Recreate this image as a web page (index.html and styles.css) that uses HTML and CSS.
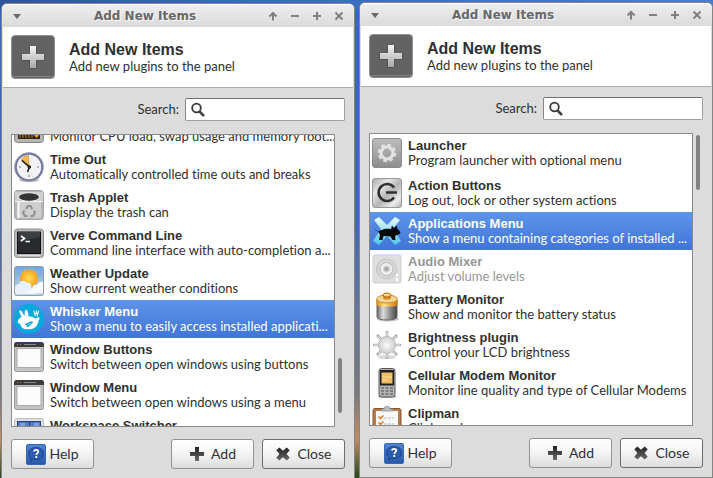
FILE: index.html
```
<!DOCTYPE html>
<html lang="en">
<head>
<meta charset="utf-8">
<title>Add New Items</title>
<link rel="stylesheet" href="styles.css">
</head>
<body>
<svg class="defs" aria-hidden="true">
  <defs>
    <linearGradient id="g-metal" x1="0" y1="0" x2="0" y2="1"><stop offset="0" stop-color="#f4f4f4"/><stop offset="1" stop-color="#a9a9a9"/></linearGradient>
    <linearGradient id="g-gray" x1="0" y1="0" x2="0" y2="1"><stop offset="0" stop-color="#bdbdbd"/><stop offset="1" stop-color="#8d8d8d"/></linearGradient>
    <linearGradient id="g-brush" x1="0" y1="0" x2="1" y2="1"><stop offset="0" stop-color="#a8a8a8"/><stop offset=".3" stop-color="#e6e6e6"/><stop offset=".55" stop-color="#b4b4b4"/><stop offset=".8" stop-color="#ececec"/><stop offset="1" stop-color="#aaa"/></linearGradient>
    <linearGradient id="g-dark" x1="0" y1="0" x2="0" y2="1"><stop offset="0" stop-color="#222"/><stop offset="1" stop-color="#6a6a6a"/></linearGradient>
    <linearGradient id="g-sky" x1="0" y1="0" x2="0" y2="1"><stop offset="0" stop-color="#6fa5df"/><stop offset="1" stop-color="#c3dcf2"/></linearGradient>
    <linearGradient id="g-cell" x1="0" y1="0" x2="1" y2="0"><stop offset="0" stop-color="#666"/><stop offset=".3" stop-color="#ddd"/><stop offset=".6" stop-color="#999"/><stop offset="1" stop-color="#444"/></linearGradient>
    <linearGradient id="g-amber" x1="0" y1="0" x2="1" y2="0"><stop offset="0" stop-color="#d98a10"/><stop offset=".35" stop-color="#ffe08a"/><stop offset="1" stop-color="#d07c08"/></linearGradient>
    <radialGradient id="g-sun"><stop offset="0" stop-color="#ffdd55"/><stop offset="1" stop-color="#f5a31c"/></radialGradient>
    <radialGradient id="g-ball"><stop offset="0" stop-color="#fafafa"/><stop offset="1" stop-color="#cfcfcf"/></radialGradient>
    <linearGradient id="g-blue" x1="0" y1="0" x2="0" y2="1"><stop offset="0" stop-color="#5286cf"/><stop offset="1" stop-color="#2a58a8"/></linearGradient>
    <linearGradient id="g-ice" x1="0" y1="0" x2="0" y2="1"><stop offset="0" stop-color="#e8faff"/><stop offset="1" stop-color="#4cc4ea"/></linearGradient>
  </defs>
  <symbol id="i-menu" viewBox="0 0 22 22"><path d="M7 9h8l-4 5z" fill="#6a6a6a"/></symbol>
  <symbol id="i-up" viewBox="0 0 22 22"><path d="M11 15.500V9M7.500 11.500L11 8l3.500 3.500" fill="none" stroke="#808080" stroke-width="2"/></symbol>
  <symbol id="i-min" viewBox="0 0 22 22"><path d="M7 10h8v2H7z" fill="#808080"/></symbol>
  <symbol id="i-max" viewBox="0 0 22 22"><path d="M10 7h2v3h3v2h-3v3h-2v-3H7v-2h3z" fill="#808080"/></symbol>
  <symbol id="i-close" viewBox="0 0 22 22"><path d="M7.500 7.500l7 7M14.500 7.500l-7 7" stroke="#808080" stroke-width="2"/></symbol>
  <symbol id="i-plugin" viewBox="0 0 44 44">
    <rect x=".5" y=".5" width="43" height="43" rx="3.500" fill="#636363" stroke="#929292"/>
    <path d="M2 41.500h40" stroke="#848484"/>
    <path d="M18.500 11.500h7v8h8v6h-8v8h-7v-8h-8v-6h8z" fill="#444"/>
    <path d="M19 11h6v8h8v6h-8v8h-6v-8h-8v-6h8z" fill="url(#g-metal)"/>
  </symbol>
  <symbol id="i-search" viewBox="0 0 16 16"><circle cx="6.500" cy="6" r="4.300" fill="#fafafa" stroke="#3a3a3a" stroke-width="1.800"/><path d="M9.500 9.500l4.500 4.500" stroke="#444" stroke-width="2.600"/></symbol>
  <symbol id="i-help" viewBox="0 0 20 21">
    <rect x=".5" y=".5" width="19" height="20" rx="1.500" fill="url(#g-blue)" stroke="#3767b4"/>
    <path d="M10 3.500c4.600 0 7.500 2.400 7.500 6s-3 6-7.500 6c-1 0-2-.1-2.800-.4L4.500 17l.3-3C3.300 13 2.500 11.400 2.500 9.500c0-3.600 3-6 7.500-6z" fill="#285bb0" stroke="#173f86" stroke-width=".8"/>
    <path d="M7.800 7.500c.3-1.200 1-1.600 2.300-1.600s2.200.6 2.200 1.700c0 1.500-2 1.600-2 3.300M10.300 12v2" fill="none" stroke="#fff" stroke-width="1.800"/>
  </symbol>
  <symbol id="i-add" viewBox="0 0 16 16"><path d="M6 1h4v5h5v4h-5v5H6v-5H1V6h5z" fill="url(#g-dark)"/></symbol>
  <symbol id="i-cross" viewBox="0 0 16 16"><path d="M4.300 1.500L8 4.700l3.700-3.200 3 2.800L11.600 8l3.100 3.700-3 2.800L8 11.300l-3.700 3.200-3-2.800L4.400 8 1.300 4.300z" fill="url(#g-dark)"/></symbol>
  <symbol id="i-cpu" viewBox="0 0 30 30">
    <rect x=".5" y="1.500" width="29" height="27" rx="3" fill="#b5b5b5" stroke="#858585"/><rect x="4" y="4" width="22" height="21" fill="#2a2118"/>
    <path d="M6 24v-4M9 24v-7M12 24v-5M15 24v-9M18 24v-4" stroke="#755017" stroke-width="2"/><path d="M20 21h5l-2.500 3z" fill="#ffa800"/>
  </symbol>
  <symbol id="i-clock" viewBox="0 0 30 30">
    <ellipse cx="15" cy="28" rx="10" ry="2" fill="#bbb"/>
    <circle cx="15" cy="15" r="13.400" fill="#f2f2f4" stroke="#72789a" stroke-width="2.400"/><circle cx="15" cy="15" r="14.500" fill="none" stroke="#a7abc0" stroke-width=".8"/>
    <path d="M15 15L7 8c2-3 4.600-4.400 7.500-4.500z" fill="#f2ba54" stroke="#bd872b" stroke-width=".6"/>
    <path d="M14 23h2v2h-2zM5 14h2v2H5zM23 14h2v2h-2z" fill="#b4b4b4"/>
    <path d="M8 8.500l7.500 6.500-2 5" fill="none" stroke="#111" stroke-width="1.500"/><circle cx="15.300" cy="15" r="1.800" fill="#222"/>
  </symbol>
  <symbol id="i-trash" viewBox="0 0 30 30">
    <rect x=".5" y=".5" width="29" height="29" rx="3" fill="#b7b7b7" stroke="#a6a6a6"/>
    <path d="M1 2h28v9H1z" fill="#cfcfcf"/><path d="M3 12h24v16H3z" fill="#cecece"/><path d="M4.500 12v16" stroke="#f6f6f6" stroke-width="2"/><path d="M1 11.500h28" stroke="#f4f4f4"/>
    <ellipse cx="15" cy="7" rx="10.500" ry="4.300" fill="#343434" stroke="#f2f2f2"/>
    <path d="M12 19l2-3h2.500l1.800 3M20 20.500l1 2.500-2 3h-2.500M13.500 26h-2.500l-2-3 1.500-2.500" fill="none" stroke="#8f8f8f" stroke-width="2"/>
  </symbol>
  <symbol id="i-term" viewBox="0 0 30 30">
    <rect x=".5" y="1" width="29" height="28.500" rx="3" fill="#b8b8b8" stroke="#8c8c8c"/><rect x="3.500" y="4" width="23" height="21.500" fill="#282a2d" stroke="#111"/>
    <path d="M4 14l22-5V4H4z" fill="#3b3d40"/><path d="M7 8l3.500 2.500L7 13M11.500 13.500H16" fill="none" stroke="#fff" stroke-width="1.600"/><path d="M4 27.500h22" stroke="#ddd"/>
  </symbol>
  <symbol id="i-weather" viewBox="0 0 30 30">
    <rect x=".5" y=".5" width="29" height="29" rx="2" fill="url(#g-sky)" stroke="#929da8"/>
    <path d="M15 2v24M3 14h24M6.500 5.500l17 17M23.500 5.500l-17 17M10 3l9 22M20 3l-9 22" stroke="#c3c2a4" stroke-width="1"/>
    <circle cx="15" cy="12.500" r="9" fill="url(#g-sun)"/>
    <path d="M1 25c-.5-5 1-7 4-7 1-4 6-4 8-1 3-1 5 2 4 4l5 4v3H2z" fill="#e9f1fa"/><path d="M18 24c0-4 2-6 5-5 1-3 4-4 6-3v11H13c0-3 2-4 5-3z" fill="#f7faff"/>
  </symbol>
  <symbol id="i-whisker" viewBox="0 0 32 32">
    <circle cx="16" cy="16" r="16" fill="#08a8dc"/>
    <path d="M4 18c.5-2 2-3.400 4-4L5.800 8.500C5 6.500 7 5.800 8 7.500l3.200 5.300.3-4.800c.2-2.300 2.800-2.300 3.200 0l1 5.500c3-.5 5 .5 7 2l3-1.500c2 0 2.300 2 .5 3.200-.3 5-3.500 9.300-9.500 9.800-6.500.5-9.500-2-10.200-6C5 20.800 3.700 19.800 4 18z" fill="#fff"/>
    <path d="M12 22l7-3M15 24l5-5M13.500 24.500l3-5.500" stroke="#08a8dc" stroke-width="1.300"/><path d="M21 7l1.500 5 1.500-4 1 4 1.500-5" fill="none" stroke="#d6f2fc" stroke-width="1.300"/>
  </symbol>
  <symbol id="i-window" viewBox="0 0 30 30">
    <rect x=".5" y=".5" width="29" height="29" rx="2" fill="#c4c4c4" stroke="#999"/><path d="M0 5V3c0-2 1-3 3-3h24c2 0 3 1 3 3v2z" fill="#3b3b3b"/>
    <path d="M10 2.500h12" stroke="#888"/><path d="M3 2.500h1M6 2.500h1" stroke="#b77d53"/><rect x="3" y="6.500" width="24" height="19" fill="#fcfcfc" stroke="#aaa"/>
  </symbol>
  <symbol id="i-workspace" viewBox="0 0 30 30">
    <rect x=".5" y=".5" width="29" height="29" rx="2" fill="#e1e1e1" stroke="#bbb"/><rect x="3" y="3" width="24" height="22" fill="#203e82"/>
    <path d="M4 4h11v9H4zM16 4h10v9H16z" fill="#527cc0"/><path d="M6 5h5v5H6zM20 5h5v5h-5z" fill="#7fa0d4"/>
  </symbol>
  <symbol id="i-gear" viewBox="0 0 30 30">
    <rect x=".5" y=".5" width="29" height="29" rx="2.500" fill="url(#g-gray)" stroke="#8a8a8a"/>
    <circle cx="15" cy="15" r="8.300" fill="none" stroke="#e2e2e2" stroke-width="2" stroke-dasharray="3.800 2.720"/>
    <circle cx="15" cy="15" r="6" fill="none" stroke="#e2e2e2" stroke-width="3.200"/>
  </symbol>
  <symbol id="i-power" viewBox="0 0 30 30">
    <rect x=".5" y=".5" width="29" height="29" rx="2.500" fill="url(#g-brush)" stroke="#999"/>
    <path d="M22 9.500a8.500 8.500 0 1 0 0 10M14 14.500h11" fill="none" stroke="#303030" stroke-width="2.600"/>
  </symbol>
  <symbol id="i-xfce" viewBox="0 0 30 30">
    <path d="M2 4l5-3 8 8 8-8 5 3-7 9 8 12-6 4-8-9-8 9-6-4 8-12z" fill="url(#g-ice)"/>
    <path d="M1 8.500c1 5 3 7 6 6.500 5-2.500 9-2.500 12-2l1-3.500 2 2.500 2.500-2.500 1 3.500c1.500.5 2.500 2.500 3 4-1.500 1.500-3 2-4 2l-1.500 1.500.5 3.500h-3l-2-3.500-7-.5-1 4H7l1-5-2-4C3.500 14.500 1.500 12.500 1 8.500z" fill="#080808"/>
  </symbol>
  <symbol id="i-audio" viewBox="0 0 30 30">
    <rect x="1" y="1" width="28" height="28" rx="2" fill="#dedede" stroke="#cfcfcf"/><circle cx="14.500" cy="15" r="10" fill="#d6d6d6" stroke="#c3c3c3"/>
    <circle cx="14.500" cy="15" r="6.500" fill="#eee" stroke="#bbb"/><circle cx="14.500" cy="15" r="3" fill="#aaa" stroke="#ddd"/><path d="M25 20v2M25 24v3" stroke="#fff" stroke-width="2"/>
  </symbol>
  <symbol id="i-battery" viewBox="0 0 30 30">
    <ellipse cx="16" cy="27" rx="11" ry="2.500" fill="#c4c4c4"/>
    <path d="M5 8v17c0 4 20 4 20 0V8z" fill="url(#g-cell)" stroke="#666"/><path d="M4.500 7v6c2 2.500 19 2.500 21 0V7z" fill="url(#g-amber)"/>
    <ellipse cx="15" cy="7" rx="10.300" ry="4" fill="#f6d598" stroke="#c98a2c"/><path d="M11 3v3c0 2 8 2 8 0V3z" fill="#d58a20"/><ellipse cx="15" cy="3" rx="4" ry="2" fill="#ffd38d" stroke="#b66c14"/>
  </symbol>
  <symbol id="i-bright" viewBox="0 0 30 30">
    <ellipse cx="15" cy="27" rx="9" ry="2" fill="#d8d8d8"/>
    <path d="M15 1v28M1 15h28M5 5l20 20M25 5L5 25" stroke="#aaa" stroke-width="2.600"/><path d="M15 2v26M2 15h26M6 6l18 18M24 6L6 24" stroke="#eee"/>
    <circle cx="15" cy="15" r="8.500" fill="url(#g-ball)" stroke="#bbb"/>
  </symbol>
  <symbol id="i-phone" viewBox="0 0 30 30">
    <ellipse cx="15" cy="28.500" rx="10" ry="1.500" fill="#b8b8b8"/><rect x="7" y=".5" width="16" height="28.500" rx="2.500" fill="#b4b4b4" stroke="#555"/>
    <rect x="8" y="2" width="14" height="15.500" fill="#202020"/><rect x="9.500" y="4.500" width="11" height="11" fill="#f1bd62"/><path d="M10 9h10M10 12h6" stroke="#ffe0a0"/>
    <path d="M9 20h12M9 23h12M9 26h12" stroke="#6d6d6d" stroke-width="1.500" stroke-dasharray="3 1.500"/>
  </symbol>
  <symbol id="i-clip" viewBox="0 0 30 30">
    <rect x="1" y="2.500" width="28" height="30" rx="2" fill="#b77c4c" stroke="#8d5527"/><path d="M4 5h22v25H4z" fill="#f7f7f7"/>
    <path d="M9 5V3h3c0-4 6-4 6 0h3v2z" fill="#bcbcbc" stroke="#888" stroke-width=".7"/>
    <path d="M12 12h10M12 18h10" stroke="#bbb" stroke-dasharray="3 1"/><path d="M6.500 10.500l2 2 3-3M6.500 16.500l2 2 3-3M6.500 22.500l2 2 3-3" fill="none" stroke="#e07921" stroke-width="1.500"/>
  </symbol>
</svg>

<main class="desktop">
  <section class="window window-back">
    <header class="titlebar">
      <button class="wm" aria-label="Window menu"><svg><use href="#i-menu"/></svg></button>
      <span class="caption">Add New Items</span>
      <button class="wm" aria-label="Roll up"><svg><use href="#i-up"/></svg></button>
      <button class="wm" aria-label="Minimize"><svg><use href="#i-min"/></svg></button>
      <button class="wm" aria-label="Maximize"><svg><use href="#i-max"/></svg></button>
      <button class="wm" aria-label="Close window"><svg><use href="#i-close"/></svg></button>
    </header>
    <div class="banner">
      <svg class="banner-icon"><use href="#i-plugin"/></svg>
      <div><h1>Add New Items</h1><p>Add new plugins to the panel</p></div>
    </div>
    <div class="content">
      <div class="search">
        <label for="search-a">Search:</label>
        <div class="field"><svg><use href="#i-search"/></svg><input id="search-a" type="text"></div>
      </div>
      <div class="browser">
        <ul class="items scrolled">
          <li><svg class="icon"><use href="#i-cpu"/></svg><div><p>Monitor CPU load, swap usage and memory foot...</p></div></li>
          <li><svg class="icon"><use href="#i-clock"/></svg><div><h2>Time Out</h2><p>Automatically controlled time outs and breaks</p></div></li>
          <li><svg class="icon"><use href="#i-trash"/></svg><div><h2>Trash Applet</h2><p>Display the trash can</p></div></li>
          <li><svg class="icon"><use href="#i-term"/></svg><div><h2>Verve Command Line</h2><p>Command line interface with auto-completion a...</p></div></li>
          <li><svg class="icon"><use href="#i-weather"/></svg><div><h2>Weather Update</h2><p>Show current weather conditions</p></div></li>
          <li class="selected"><svg class="icon"><use href="#i-whisker"/></svg><div><h2>Whisker Menu</h2><p>Show a menu to easily access installed applicati...</p></div></li>
          <li><svg class="icon"><use href="#i-window"/></svg><div><h2>Window Buttons</h2><p>Switch between open windows using buttons</p></div></li>
          <li><svg class="icon"><use href="#i-window"/></svg><div><h2>Window Menu</h2><p>Switch between open windows using a menu</p></div></li>
          <li><svg class="icon"><use href="#i-workspace"/></svg><div><h2>Workspace Switcher</h2></div></li>
        </ul>
        <div class="thumb thumb-end"></div>
      </div>
      <footer class="actions">
        <button class="btn help"><svg><use href="#i-help"/></svg>Help</button>
        <button class="btn"><svg><use href="#i-add"/></svg>Add</button>
        <button class="btn default"><svg><use href="#i-cross"/></svg>Close</button>
      </footer>
    </div>
  </section>

  <section class="window">
    <header class="titlebar">
      <button class="wm" aria-label="Window menu"><svg><use href="#i-menu"/></svg></button>
      <span class="caption">Add New Items</span>
      <button class="wm" aria-label="Roll up"><svg><use href="#i-up"/></svg></button>
      <button class="wm" aria-label="Minimize"><svg><use href="#i-min"/></svg></button>
      <button class="wm" aria-label="Maximize"><svg><use href="#i-max"/></svg></button>
      <button class="wm" aria-label="Close window"><svg><use href="#i-close"/></svg></button>
    </header>
    <div class="banner">
      <svg class="banner-icon"><use href="#i-plugin"/></svg>
      <div><h1>Add New Items</h1><p>Add new plugins to the panel</p></div>
    </div>
    <div class="content">
      <div class="search">
        <label for="search-b">Search:</label>
        <div class="field"><svg><use href="#i-search"/></svg><input id="search-b" type="text"></div>
      </div>
      <div class="browser">
        <ul class="items">
          <li class="pinned"><svg class="icon"><use href="#i-gear"/></svg><div><h2>Launcher</h2><p>Program launcher with optional menu</p></div></li>
          <li><svg class="icon"><use href="#i-power"/></svg><div><h2>Action Buttons</h2><p>Log out, lock or other system actions</p></div></li>
          <li class="selected"><svg class="icon"><use href="#i-xfce"/></svg><div><h2>Applications Menu</h2><p>Show a menu containing categories of installed ...</p></div></li>
          <li class="disabled"><svg class="icon"><use href="#i-audio"/></svg><div><h2>Audio Mixer</h2><p>Adjust volume levels</p></div></li>
          <li><svg class="icon"><use href="#i-battery"/></svg><div><h2>Battery Monitor</h2><p>Show and monitor the battery status</p></div></li>
          <li><svg class="icon"><use href="#i-bright"/></svg><div><h2>Brightness plugin</h2><p>Control your LCD brightness</p></div></li>
          <li><svg class="icon"><use href="#i-phone"/></svg><div><h2>Cellular Modem Monitor</h2><p>Monitor line quality and type of Cellular Modems</p></div></li>
          <li><svg class="icon"><use href="#i-clip"/></svg><div><h2>Clipman</h2><p>Clipboard</p></div></li>
        </ul>
        <div class="thumb"></div>
      </div>
      <footer class="actions">
        <button class="btn help"><svg><use href="#i-help"/></svg>Help</button>
        <button class="btn"><svg><use href="#i-add"/></svg>Add</button>
        <button class="btn default"><svg><use href="#i-cross"/></svg>Close</button>
      </footer>
    </div>
  </section>
</main>
</body>
</html>
```
FILE: styles.css
```
* { box-sizing: border-box; }

body {
  margin: 0;
  font: 13px/15px Lato, "Liberation Sans", sans-serif;
  font-variant-ligatures: none;
  color: #303030;
}

h1, h2, p, ul { margin: 0; padding: 0; }
svg { display: block; flex: none; }
.defs { position: absolute; width: 0; height: 0; }

.desktop {
  display: flex;
  gap: 4px;
  height: 100vh;
  padding: 2px 0 0 1px;
  overflow: hidden;
  background:
    linear-gradient(90deg, #2f5599, #3568c0 30%, #4a7bcb) top / 100% 10px no-repeat,
    linear-gradient(#3568b8, #3f67b4 45%, #66759b 65%, #77797d 82%, #c08a62 92%, #234a1c);
}

.window {
  display: flex;
  flex: 1;
  flex-direction: column;
  min-width: 0;
  height: calc(100vh - 2px);
  border: 1px solid #858585;
  border-radius: 6px 6px 0 0;
  background: #dcdcdc;
}

.window-back { margin-top: 1px; }

.titlebar {
  display: flex;
  align-items: center;
  height: 23px;
  padding: 0 4px;
  border-top: 1px solid #fff;
  border-radius: 5px 5px 0 0;
  background: linear-gradient(#eeeeee, #dadada);
}

.caption {
  flex: 1;
  font: bold 12px/16px "DejaVu Sans", sans-serif;
  text-align: center;
  color: #686868;
  text-shadow: 1px 1px 0 #f8f8f8;
}

.wm {
  width: 22px;
  height: 22px;
  padding: 0;
  border: 0;
  background: none;
}

.wm svg { width: 22px; height: 22px; }

.banner {
  display: flex;
  align-items: center;
  gap: 14px;
  height: 61px;
  margin: 0 1px;
  padding: 0 8px;
  border-bottom: 1px solid #acacac;
  background: #fff;
}

.banner-icon { width: 44px; height: 44px; }

h1, h2 { font-family: "Liberation Sans", Arial, sans-serif; }
h1 { font-size: 16px; line-height: 18px; }
h2 { font-size: 13px; line-height: 15px; }

.content {
  display: flex;
  flex: 1;
  flex-direction: column;
  min-height: 0;
  padding: 10px 9px 9px;
}

.search {
  display: flex;
  align-items: center;
  justify-content: flex-end;
  gap: 6px;
  margin-bottom: 13px;
}

.field {
  display: flex;
  align-items: center;
  width: 160px;
  height: 23px;
  padding: 0 4px;
  border: 1px solid #a0a0a0;
  border-top-color: #707070;
  border-left-color: #858585;
  border-radius: 2px;
  background: #fff;
}

.field svg { width: 16px; height: 16px; }

.field input {
  width: 100%;
  border: 0;
  outline: 0;
  font: inherit;
  background: none;
}

.browser {
  display: flex;
  flex: 1;
  gap: 3px;
  min-height: 0;
  margin-bottom: 12px;
  padding-right: 3px;
}

.items {
  flex: 1;
  min-width: 0;
  overflow: hidden;
  border: 1px solid #8a8a8a;
  background: #fff;
  list-style: none;
}

.items li {
  display: flex;
  align-items: center;
  gap: 6px;
  height: 38px;
  padding: 0 2px;
  white-space: nowrap;
}

.items li:last-child { align-items: flex-start; padding-top: 4px; }

.scrolled li:first-child {
  align-items: flex-end;
  margin-top: -25px;
  padding-bottom: 4px;
}

.items .pinned { margin-bottom: 2px; }

.icon { width: 30px; height: 30px; }

.items .selected {
  color: #fff;
  background: linear-gradient(#5d95e8, #4174d8);
}

.disabled { color: #969696; }

.thumb {
  width: 4px;
  height: 55px;
  margin: 2px 0 14px;
  border-radius: 2px;
  background: #828282;
}

.thumb-end { align-self: flex-end; }

.actions { display: flex; gap: 8px; }

.btn {
  display: flex;
  align-items: center;
  justify-content: center;
  gap: 6px;
  width: 83px;
  height: 30px;
  padding: 0;
  border: 1px solid #929292;
  border-radius: 3px;
  font: 14px/16px Lato, "Liberation Sans", sans-serif;
  color: #303030;
  background: linear-gradient(#fff, #f4f4f4 50%, #dcdcdc);
}

.btn svg { width: 16px; height: 16px; }
.help { gap: 3px; margin-right: auto; }
.help svg { width: 20px; height: 21px; }
.default { border-color: #6e6e6e; }
```
